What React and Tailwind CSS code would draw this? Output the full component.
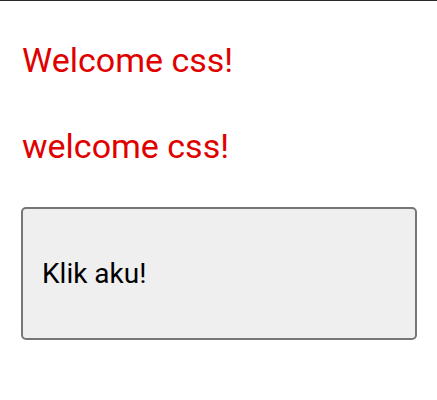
export default function App() {
  return (
    <div className="min-h-[400px] bg-white border-t border-[#2b2b2b] px-[22px] pt-[39px] font-['Roboto',sans-serif]">
      <h1 className="text-[34px] leading-[40px] text-[#e00000]">Welcome css!</h1>
      <h2 className="mt-[46px] text-[34px] leading-[40px] text-[#e00000]">welcome css!</h2>
      <button className="mt-[41px] -ml-px flex h-[133px] w-[396px] items-center rounded-[5px] border-2 border-[#767676] bg-[#efefef] px-[19px] text-left text-[28px] text-black">
        Klik aku!
      </button>
    </div>
  );
}
